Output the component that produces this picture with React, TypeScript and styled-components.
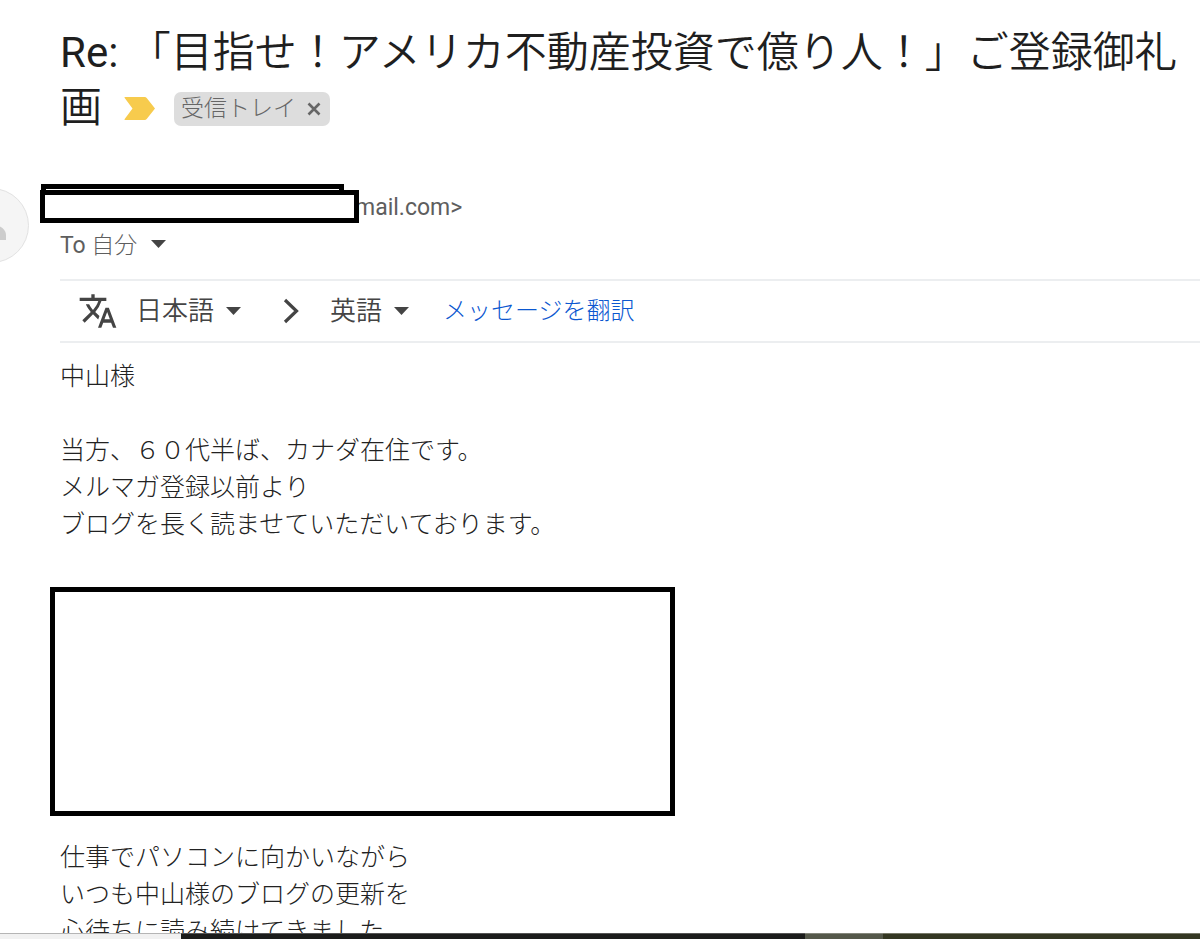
import React from "react";
import styled, { createGlobalStyle } from "styled-components";

const GlobalStyle = createGlobalStyle`
  * { box-sizing: border-box; }
  body {
    margin: 0;
    background: #fff;
    color: #222;
    font-family: Roboto, "Noto Sans CJK JP", sans-serif;
    font-weight: 350;
    text-spacing-trim: space-all;
  }
  button { font: inherit; color: inherit; border: 0; padding: 0; background: none; cursor: pointer; }
`;

const Screen = styled.div`
  display: flex;
  flex-direction: column;
  height: 100vh;
  overflow: hidden;
`;

const Mail = styled.main`
  flex: 1;
  min-height: 0;
  overflow: hidden;
  padding: 25px 0 0 60px;
`;

const Subject = styled.h1`
  margin: 0;
  font-size: 42px;
  line-height: 55px;
  font-weight: 350;
  color: #1f1f1f;
`;

const Latin = styled.span`
  font-weight: 400;
`;

const MarkerButton = styled.button`
  margin-left: 22px;
  vertical-align: 2px;
  line-height: 0;
`;

const Chip = styled.span`
  display: inline-flex;
  align-items: center;
  gap: 11px;
  height: 34px;
  margin-left: 19px;
  padding: 0 9px 0 7px;
  border-radius: 7px;
  background: #ddd;
  color: #666;
  font-size: 23px;
  font-weight: 300;
  line-height: 34px;
  vertical-align: 6px;

  button { line-height: 0; }
`;

const Sender = styled.section`
  display: flex;
  gap: 31px;
  margin-top: 49px;
  margin-left: -106px;
  height: 95px;
`;

const Avatar = styled.div`
  flex: none;
  width: 75px;
  height: 75px;
  margin-top: 4px;
  border: 1px solid #e2e2e2;
  border-radius: 50%;
  background: #f5f5f5;
  overflow: hidden;
`;

const SenderLines = styled.div`
  color: #5e5e5e;
  font-size: 23px;
  font-weight: 300;
`;

const Address = styled.div`
  position: relative;
  display: flex;
  align-items: center;
  height: 33px;
  margin: 6px 0 0 -20px;
  font-weight: 400;
`;

const Redaction = styled.div<{ $back?: boolean }>`
  z-index: ${(p) => (p.$back ? 0 : 1)};
  position: ${(p) => (p.$back ? "absolute" : "relative")};
  top: ${(p) => (p.$back ? "-6px" : "0")};
  left: ${(p) => (p.$back ? "1px" : "0")};
  width: ${(p) => (p.$back ? "303px" : "319px")};
  height: 33px;
  border: 5px solid #000;
  background: #fff;
`;

const Domain = styled.span`
  margin-left: -4px;
  padding-top: 2px;
`;

const Recipient = styled.button`
  display: flex;
  align-items: center;
  gap: 14px;
  height: 42px;

  span { padding-bottom: 2px; }
`;

const TranslateBar = styled.div`
  display: flex;
  align-items: center;
  height: 64px;
  padding-left: 18px;
  border-top: 2px solid #eceef0;
  border-bottom: 2px solid #eceef0;
  color: #444;
`;

const Language = styled.button`
  display: flex;
  align-items: center;
  gap: 12px;
  font-size: 26px;

  span { padding-bottom: 5px; }
`;

const TranslateIcon = styled.svg`
  margin-right: 18px;
`;

const Chevron = styled.svg`
  margin: 0 30px 0 42px;
`;

const TranslateLink = styled.a`
  margin-left: 34px;
  padding-bottom: 6px;
  color: #0b57d0;
  font-size: 24px;
  font-weight: 300;
  text-decoration: none;
`;

const Body = styled.article`
  padding-top: 15px;
  font-size: 25px;
  font-weight: 300;
  line-height: 37px;

  p { margin: 0 0 37px; }
`;

const BodyRedaction = styled.div`
  max-width: 625px;
  height: 229px;
  margin: 44px 0 23px -10px;
  border: 5px solid #000;
`;

const Taskbar = styled.footer`
  flex: none;
  display: flex;
  height: 6px;
`;

const TaskSegment = styled.div<{ $color: string; $edge: string; $grow: number }>`
  flex: ${(p) => p.$grow} 1 0;
  background: ${(p) => p.$color};
  border-top: 1px solid ${(p) => p.$edge};
`;

const Caret = () => (
  <svg width="15" height="8" viewBox="0 0 15 8" aria-hidden="true">
    <path d="M0 0h15L7.500 8z" fill="#444" />
  </svg>
);

export default function App() {
  return (
    <Screen>
      <GlobalStyle />
      <Mail lang="ja">
        <Subject>
          <Latin>Re: </Latin>「目指せ！アメリカ不動産投資で億り人！」ご登録御礼画
          <MarkerButton aria-label="重要">
            <svg width="31" height="23" viewBox="0 0 31 23">
              <path d="M1 0h19.500q1.500 0 2.400 1.200L31 11.500l-8.100 10.300q-.9 1.200-2.400 1.200H1q-1 0-.3-1L8.500 11.500.7 1Q0 0 1 0z" fill="#f7cb4d" />
            </svg>
          </MarkerButton>
          <Chip>
            受信トレイ
            <button aria-label="ラベルを削除">
              <svg width="14" height="14" viewBox="0 0 14 14">
                <path d="M1.500 1.500l11 11m0-11l-11 11" stroke="#666" strokeWidth="2.600" />
              </svg>
            </button>
          </Chip>
        </Subject>

        <Sender>
          <Avatar>
            <svg width="73" height="73" viewBox="0 0 73 73" aria-hidden="true">
              <circle cx="36" cy="26" r="9" fill="#ccc" />
              <path d="M21 51v-4c0-8 10-12 15-12 6 0 15 4 15 11v5z" fill="#ccc" />
            </svg>
          </Avatar>
          <SenderLines>
            <Address>
              <Redaction $back />
              <Redaction />
              <Domain>mail.com&gt;</Domain>
            </Address>
            <Recipient>
              <span><Latin>To</Latin> 自分</span>
              <Caret />
            </Recipient>
          </SenderLines>
        </Sender>

        <TranslateBar>
          <TranslateIcon width="40" height="40" viewBox="0 0 24 24" aria-hidden="true">
            <path
              fill="#444"
              d="M12.870 15.070l-2.540-2.510.03-.03A17.520 17.520 0 0 0 14.070 6H17V4h-7V2H8v2H1v1.990h11.170C11.500 7.920 10.440 9.750 9 11.350 8.070 10.320 7.300 9.190 6.690 8h-2c.73 1.630 1.730 3.170 2.980 4.560l-5.090 5.020L4 19l5-5 3.110 3.110.76-2.040zM18.500 10h-2L12 22h2l1.120-3h4.750L21 22h2l-4.500-12zm-2.620 7l1.620-4.330L19.120 17h-3.240z"
            />
          </TranslateIcon>
          <Language><span>日本語</span><Caret /></Language>
          <Chevron width="17" height="26" viewBox="0 0 17 26" aria-hidden="true">
            <path d="M2 2l11.500 11L2 24" fill="none" stroke="#444" strokeWidth="3.200" />
          </Chevron>
          <Language><span>英語</span><Caret /></Language>
          <TranslateLink href="#translate">メッセージを翻訳</TranslateLink>
        </TranslateBar>

        <Body>
          <p>中山様</p>
          <p>
            当方、６０代半ば、カナダ在住です。<br />
            メルマガ登録以前より<br />
            ブログを長く読ませていただいております。
          </p>
          <BodyRedaction />
          <p>
            仕事でパソコンに向かいながら<br />
            いつも中山様のブログの更新を<br />
            心待ちに読み続けてきました
          </p>
        </Body>
      </Mail>
      <Taskbar>
        <TaskSegment $grow={181} $color="#f1f1f1" $edge="#b5b5b5" />
        <TaskSegment $grow={624} $color="#1b1c1b" $edge="#555" />
        <TaskSegment $grow={78} $color="#55584a" $edge="#85877c" />
        <TaskSegment $grow={317} $color="#343722" $edge="#777969" />
      </Taskbar>
    </Screen>
  );
}
